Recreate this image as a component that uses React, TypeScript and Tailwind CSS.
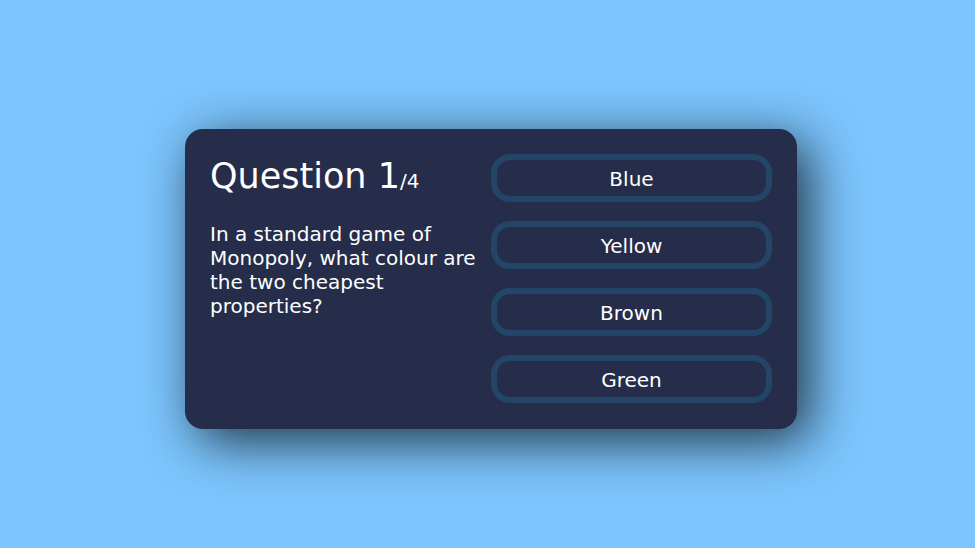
import React from "react";

const answers = ["Blue", "Yellow", "Brown", "Green"];

export default function App() {
  return (
    <div
      className="min-h-screen w-full bg-[#7cc5fe] flex items-center justify-center pl-[7px] pt-[9px] text-white"
      style={{ fontFamily: '"DejaVu Sans", Verdana, sans-serif' }}
    >
      <div className="w-[612px] h-[300px] bg-[#252d4a] rounded-[18px] p-[25px] flex shadow-[12px_12px_52px_0px_rgba(0,0,0,0.75)]">
        <div className="w-1/2 flex flex-col">
          <div className="pt-[2px] mb-[20px] text-[20px] leading-[41px]">
            <span className="text-[35px]">Question 1</span>/4
          </div>
          <div className="text-[20px] leading-[24px] pr-[4px]">
            In a standard game of Monopoly, what colour are the two cheapest properties?
          </div>
        </div>
        <div className="w-1/2 flex flex-col justify-between">
          {answers.map((a) => (
            <button
              key={a}
              className="w-full h-[48px] flex items-center justify-center pt-[2px] text-[20px] leading-[24px] text-white bg-[#252d4a] border-[6px] border-[#234668] rounded-[19px]"
            >
              {a}
            </button>
          ))}
        </div>
      </div>
    </div>
  );
}
